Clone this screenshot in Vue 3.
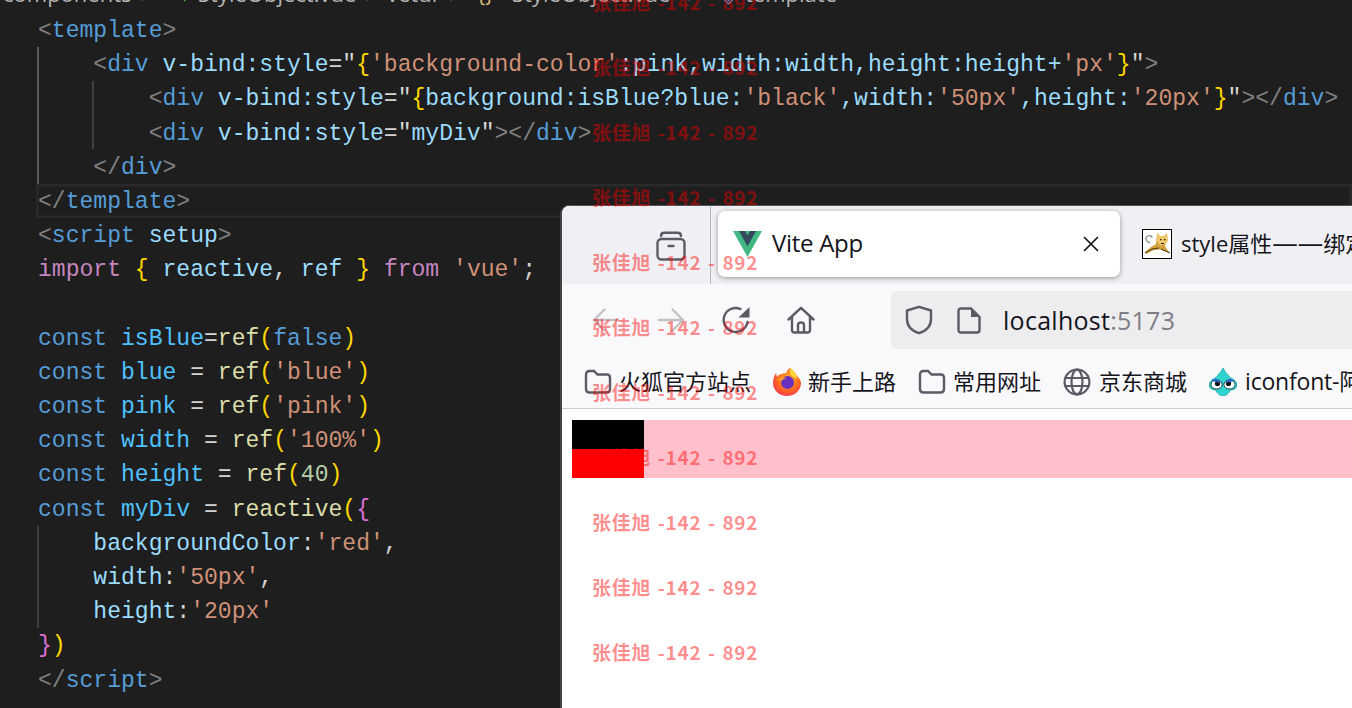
<script setup>
const T = (s) => ['t', s]
const N = (s) => ['n', s]
const A = (s) => ['a', s]
const S = (s) => ['s', s]
const Y = (s) => ['y', s]
const P = (s) => ['p', s]
const W = (s) => ['w', s]
const K = (s) => ['k', s]
const I = (s) => ['i', s]
const C = (s) => ['c', s]
const F = (s) => ['f', s]

const tagOpen = (name) => [T('<'), N(name)]
const lines = [
  [T('<'), N('template'), T('>')],
  [W('    '), ...tagOpen('div'), W(' '), A('v-bind:style'), W('="'), Y('{'), S("'background-color'"), A(':pink,width:width,height:height+'), S("'px'"), Y('}'), W('"'), T('>')],
  [W('        '), ...tagOpen('div'), W(' '), A('v-bind:style'), W('="'), Y('{'), A('background:isBlue?blue:'), S("'black'"), A(',width:'), S("'50px'"), A(',height:'), S("'20px'"), Y('}'), W('"'), T('></'), N('div'), T('>')],
  [W('        '), ...tagOpen('div'), W(' '), A('v-bind:style'), W('="'), A('myDiv'), W('"'), T('></'), N('div'), T('>')],
  [W('    '), T('</'), N('div'), T('>')],
  [T('</'), N('template'), T('>')],
  [T('<'), N('script'), W(' '), A('setup'), T('>')],
  [I('import'), W(' '), Y('{'), W(' '), A('reactive'), W(', '), A('ref'), W(' '), Y('}'), W(' '), I('from'), W(' '), S("'vue'"), W(';')],
  [],
  [K('const'), W(' '), C('isBlue'), W('='), F('ref'), Y('('), K('false'), Y(')')],
  [K('const'), W(' '), C('blue'), W(' = '), F('ref'), Y('('), S("'blue'"), Y(')')],
  [K('const'), W(' '), C('pink'), W(' = '), F('ref'), Y('('), S("'pink'"), Y(')')],
  [K('const'), W(' '), C('width'), W(' = '), F('ref'), Y('('), S("'100%'"), Y(')')],
  [K('const'), W(' '), C('height'), W(' = '), F('ref'), Y('('), ['m', '40'], Y(')')],
  [K('const'), W(' '), C('myDiv'), W(' = '), F('reactive'), Y('('), P('{')],
  [W('    '), A('backgroundColor'), W(':'), S("'red'"), W(',')],
  [W('    '), A('width'), W(':'), S("'50px'"), W(',')],
  [W('    '), A('height'), W(':'), S("'20px'")],
  [P('}'), Y(')')],
  [T('</'), N('script'), T('>')]
]

const marks = Array.from({ length: 11 }, (_, i) => 2 + i * 65)
const folderPath = 'M2 7 Q2 3 5.5 3 H10 L13.5 6.5 H23 Q26 6.5 26 10 V21 Q26 24.5 22.5 24.5 H5.5 Q2 24.5 2 21 Z'
</script>

<template>
  <div class="desk">
    <section class="editor">
      <div class="crumbs">
        <span class="c1">components</span>
        <span class="c2">›</span>
        <span class="c3">▾</span>
        <span class="c4">StyleObject.vue</span>
        <span class="c5">›</span>
        <span class="c6">vetur</span>
        <span class="c7">›</span>
        <span class="c8">{}</span>
        <span class="c9">StyleObject.vue</span>
        <span class="c10">›</span>
        <span class="c11">◈</span>
        <span class="c12">template</span>
      </div>
      <div class="code">
        <div v-for="(line, i) in lines" :key="i" class="line" :class="{ current: i === 5 }"><span v-for="(tok, j) in line" :key="j" :class="'tok-' + tok[0]">{{ tok[1] }}</span></div>
      </div>
      <i class="guide g1"></i>
      <i class="guide g2"></i>
      <i class="guide g3"></i>
    </section>

    <section class="browser">
      <header class="tabbar">
        <svg class="view" width="30" height="30" viewBox="0 0 30 30" fill="none" stroke="#5b5b66" stroke-width="2.4" stroke-linecap="round">
          <path d="M5 5 Q5 1.8 8.5 1.8 H21.5 Q25 1.8 25 5" />
          <rect x="1.5" y="8" width="27" height="20.5" rx="4" />
          <path d="M12.5 15 H17.5" />
        </svg>
        <i class="sep"></i>
        <div class="tab active">
          <svg width="29" height="26" viewBox="0 0 29 26">
            <path d="M0 0 H29 L14.5 26 Z" fill="#41b883" />
            <path d="M6 0 H12 L14.5 4.5 L17 0 H23 L14.5 15.5 Z" fill="#35495e" />
          </svg>
          <span class="tab-title">Vite App</span>
          <svg class="close" width="16" height="16" viewBox="0 0 16 16" stroke="#15141a" stroke-width="1.7" stroke-linecap="round">
            <path d="M1.5 1.5 L14.5 14.5 M14.5 1.5 L1.5 14.5" />
          </svg>
        </div>
        <div class="tab other">
          <svg class="tomcat" width="30" height="30" viewBox="0 0 30 30">
            <rect x=".5" y=".5" width="29" height="29" fill="#fff" stroke="#000" />
            <path d="M8 14 C3 12 3 8 6 7 C8 6 10 7 10 9" fill="none" stroke="#8a8a8a" stroke-width="1.3" />
            <path d="M15 4 L18 7 H22 L25 4 L25.5 12 L23 16 L24 19 L28 24 L18 20.5 L12 21 L4 25 L3 23 L9 18 L14 15 Z" fill="#d49f3c" />
            <path d="M15 4 L18 7 H22 L25 4 L25.5 12 L22 16 H18 L15 12 Z" fill="#efc766" />
            <path d="M18 10 h1.4 v1.2 h-1.4 z M22 10 h1.4 v1.2 h-1.4 z M19 14 h3 v1 h-3 z" fill="#222" />
            <path d="M3 24 L10 20 L17 19 M19 20 L28 24" fill="none" stroke="#4a3a1a" stroke-width="1" />
          </svg>
          <span class="tab-title">style属性<span class="dash">——</span>绑定样式</span>
        </div>
      </header>

      <nav class="toolbar">
        <svg class="tool" width="28" height="28" viewBox="0 0 28 28" fill="none" stroke="#c2c2c6" stroke-width="2.4" stroke-linecap="round" stroke-linejoin="round">
          <path d="M26 14 H2 M12.5 3.5 L2 14 L12.5 24.5" />
        </svg>
        <svg class="tool" width="28" height="28" viewBox="0 0 28 28" fill="none" stroke="#c2c2c6" stroke-width="2.4" stroke-linecap="round" stroke-linejoin="round">
          <path d="M2 14 H26 M15.5 3.5 L26 14 L15.5 24.5" />
        </svg>
        <svg class="tool" width="28" height="28" viewBox="0 0 28 28" fill="none" stroke="#5b5b66" stroke-width="2.4" stroke-linecap="round">
          <path d="M25.5 16 A12 12 0 1 1 18.5 3" />
          <path d="M27.5 1 V11.5 H16.5 Z" fill="#5b5b66" stroke="none" />
        </svg>
        <svg class="tool" width="28" height="28" viewBox="0 0 28 28" fill="none" stroke="#5b5b66" stroke-width="2.4" stroke-linecap="round" stroke-linejoin="round">
          <path d="M1.5 13.5 L14 1.8 L26.5 13.5 M5 10.5 V24 Q5 26.5 7.5 26.5 H20.5 Q23 26.5 23 24 V10.5 M11 26.5 V19 Q11 16.5 14 16.5 Q17 16.5 17 19 V26.5" />
        </svg>
        <div class="url">
          <svg class="shield" width="28" height="30" viewBox="0 0 28 30" fill="none" stroke="#5b5b66" stroke-width="2.4" stroke-linejoin="round">
            <path d="M14 1.8 L26 5.5 V14 C26 21 21 26 14 28.2 C7 26 2 21 2 14 V5.5 Z" />
          </svg>
          <svg class="doc" width="24" height="27" viewBox="0 0 24 27">
            <path d="M3 1.5 H14 L22.5 10 V23 Q22.5 25.5 20 25.5 H4 Q1.5 25.5 1.5 23 V4 Q1.5 1.5 4 1.5 Z" fill="none" stroke="#5b5b66" stroke-width="2.4" />
            <path d="M14 1.5 L22.5 10 H14 Z" fill="#5b5b66" />
          </svg>
          <span class="address">localhost<span class="port">:5173</span></span>
        </div>
      </nav>

      <div class="marks">
        <div class="mark">
          <svg width="28" height="28" viewBox="0 0 28 28" fill="none" stroke="#5b5b66" stroke-width="2.4"><path :d="folderPath" /></svg>
          <span>火狐官方站点</span>
        </div>
        <div class="mark near">
          <svg width="28" height="28" viewBox="0 0 28 28">
            <defs>
              <radialGradient id="fx" cx=".55" cy=".4" r=".7">
                <stop offset="0" stop-color="#ffbd2e" />
                <stop offset=".55" stop-color="#ff6a1f" />
                <stop offset="1" stop-color="#f02d5d" />
              </radialGradient>
            </defs>
            <path d="M17 0 C21 3 23 5 24 8 C27 11 28 13 28 15 A14 13 0 0 1 0 15 C0 11 1 8 3 5 L4 9 C6 6 10 5 13 5 C14 3 15 1 17 0 Z" fill="url(#fx)" />
            <path d="M17 0 C21 3 24 6 24 11 L19 8 C17 6 16 3 17 0 Z" fill="#ffd93b" />
            <circle cx="14.5" cy="14.5" r="6.5" fill="#6b2fc0" />
            <path d="M3 12 C7 9 11 9 14 10 C10 11 9 12 9 13 Z" fill="#ff9a2e" />
          </svg>
          <span>新手上路</span>
        </div>
        <div class="mark">
          <svg width="28" height="28" viewBox="0 0 28 28" fill="none" stroke="#5b5b66" stroke-width="2.4"><path :d="folderPath" /></svg>
          <span>常用网址</span>
        </div>
        <div class="mark globe">
          <svg width="28" height="28" viewBox="0 0 28 28" fill="none" stroke="#5b5b66" stroke-width="2.2">
            <circle cx="14" cy="14" r="12.4" />
            <ellipse cx="14" cy="14" rx="5.5" ry="12.4" />
            <path d="M2 10 H26 M2 18 H26" />
          </svg>
          <span>京东商城</span>
        </div>
        <div class="mark drop">
          <svg width="28" height="28" viewBox="0 0 28 28">
            <path d="M14 0 C15.5 3.5 19 6.5 21 9.5 C25 11 28 14 28 17 C28 20 25 22 21.5 22 C20 25 17 28 14 28 C11 28 8 25 6.5 22 C3 22 0 20 0 17 C0 14 3 11 7 9.5 C9 6.5 12.5 3.5 14 0 Z" fill="#2fd4cf" stroke="#17a3a3" stroke-width=".7" />
            <ellipse cx="7.5" cy="16.5" rx="5.6" ry="4.6" fill="#fff" stroke="#1d3b3f" />
            <ellipse cx="20.5" cy="16.5" rx="5.6" ry="4.6" fill="#fff" stroke="#1d3b3f" />
            <circle cx="8.5" cy="15.5" r="2.6" fill="#111" />
            <circle cx="19.5" cy="15.5" r="2.6" fill="#111" />
            <path d="M2 13 L12.5 15 L7 10.5 Z M26 13 L15.5 15 L21 10.5 Z" fill="#2b62c4" />
          </svg>
          <span class="latin">iconfont-阿里巴巴矢量图标库</span>
        </div>
      </div>

      <main class="page">
        <div class="outer">
          <div class="black"></div>
          <div class="red"></div>
        </div>
      </main>
    </section>

    <div class="watermarks">
      <span v-for="y in marks" :key="y" class="wm" :style="{ top: y + 'px' }">张佳旭 -142 - 892</span>
    </div>
  </div>
</template>

<style scoped>
.desk {
  position: relative;
  width: 1352px;
  height: 708px;
  overflow: hidden;
  background: #1e1e1e;
}
.editor {
  height: 708px;
  color: #d4d4d4;
}
.crumbs {
  display: flex;
  align-items: flex-end;
  height: 8px;
  overflow: hidden;
  white-space: nowrap;
  font: 22px/30px "Open Sans", sans-serif;
  color: #b5b5b5;
}
.crumbs span { flex: none; }
.c1 { margin-left: 3px; width: 125px; }
.c2 { margin-left: 12px; width: 39px; color: #888; }
.c3 { width: 19px; color: #4ec94e; }
.c4 { width: 155px; }
.c5 { margin-left: 12px; width: 22px; color: #888; }
.c6 { width: 50px; }
.c7 { margin-left: 12px; width: 28px; color: #888; }
.c8 { width: 35px; color: #d7ba7d; }
.c9 { width: 165px; }
.c10 { margin-left: 10px; width: 33px; color: #888; }
.c11 { width: 25px; color: #4fa3ef; }
.code {
  margin-top: 5px;
  font: 23.06px/36.2px "Liberation Mono", monospace;
}
.line {
  height: 34.2px;
  padding-left: 38px;
  white-space: pre;
}
.line.current {
  margin-left: 36px;
  padding-left: 2px;
  box-shadow: inset 0 0 0 2.5px #2a2a2a;
}
.tok-t { color: #808080; }
.tok-n, .tok-k { color: #569cd6; }
.tok-a { color: #9cdcfe; }
.tok-s { color: #ce9178; }
.tok-y { color: #ffd700; }
.tok-p { color: #da70d6; }
.tok-w { color: #d4d4d4; }
.tok-i { color: #c586c0; }
.tok-c { color: #4fc1ff; }
.tok-f { color: #dcdcaa; }
.tok-m { color: #b5cea8; }
.guide {
  position: absolute;
  width: 2px;
  background: #404040;
}
.g1 { left: 37px; top: 47px; height: 137px; background: #5a5a5a; }
.g2 { left: 92px; top: 81px; height: 68px; }
.g3 { left: 37px; top: 526px; height: 102px; }

.browser {
  position: absolute;
  left: 560px;
  top: 205px;
  right: 0;
  bottom: 0;
  display: flex;
  flex-direction: column;
  overflow: hidden;
  background: #fff;
  border-left: 2px solid #444;
  border-top: 1px solid #555;
  border-top-left-radius: 9px;
  font-family: "Open Sans", "Noto Sans CJK SC", sans-serif;
  color: #15141a;
}
.tabbar {
  display: flex;
  flex: none;
  height: 78px;
  background: #f0f0f4;
  white-space: nowrap;
}
.view {
  flex: none;
  margin: 25px 0 0 94px;
}
.sep {
  flex: none;
  width: 1px;
  margin-left: 24px;
  background: #b8b8bc;
}
.tab {
  display: flex;
  flex: none;
  align-items: center;
  box-sizing: border-box;
  height: 66px;
  margin-top: 5px;
  font-size: 24px;
}
.active {
  width: 402px;
  margin-left: 7px;
  padding: 0 21px 0 15px;
  background: #fff;
  border-radius: 7px;
  box-shadow: 0 1px 5px rgba(0, 0, 0, .38);
}
.tab-title { margin: 0 0 4px 10px; letter-spacing: -.3px; }
.close { margin-left: auto; }
.other { margin-left: 22px; }
.other .tab-title { margin-left: 9px; font-size: 22px; letter-spacing: 0; }
.dash { font-size: 25.5px; line-height: 1; }
.toolbar {
  display: flex;
  flex: none;
  align-items: center;
  gap: 37px;
  height: 58px;
  padding: 7px 0 15px 30px;
  background: #f9f9fb;
}
.tool { flex: none; }
.url {
  display: flex;
  flex: 1;
  align-items: center;
  height: 58px;
  margin-left: 39px;
  padding-left: 14px;
  background: #ededf0;
  border-radius: 7px 0 0 7px;
}
.doc { margin-left: 24px; }
.address { margin-left: 22px; font-size: 25px; letter-spacing: .27px; }
.port { color: #7d7d85; }
.marks {
  display: flex;
  flex: none;
  align-items: center;
  gap: 22px;
  box-sizing: border-box;
  height: 45px;
  padding: 0 0 9px 22px;
  background: #f9f9fb;
  border-bottom: 1px solid #ccc;
  white-space: nowrap;
  font: 22px/30px "Noto Sans CJK SC", sans-serif;
}
.mark {
  display: flex;
  flex: none;
  align-items: center;
  gap: 7px;
}
.mark span { margin-bottom: 3px; }
.mark svg { flex: none; }
.globe { gap: 8px; }
.drop { gap: 8px; }
.mark .latin { font-family: "Open Sans", "Noto Sans CJK SC", sans-serif; font-size: 23px; letter-spacing: -.2px; margin-bottom: 2px; }
.page {
  flex: 1;
  padding: 11px 0 0 10px;
}
.outer { height: 58px; background: #ffc0cb; }
.black { width: 72px; height: 29px; background: #000; }
.red { width: 72px; height: 29px; background: #f00; }
.watermarks {
  position: absolute;
  inset: 0;
  overflow: hidden;
  pointer-events: none;
}
.wm {
  position: absolute;
  left: 592px;
  transform: translateY(-50%);
  white-space: nowrap;
  color: rgba(255, 0, 0, .45);
  letter-spacing: .75px;
  word-spacing: 1.5px;
  font: 700 19px/26px "Noto Sans CJK SC", sans-serif;
}
</style>

<style>
html, body { background: #1e1e1e; overflow: hidden; }
</style>
